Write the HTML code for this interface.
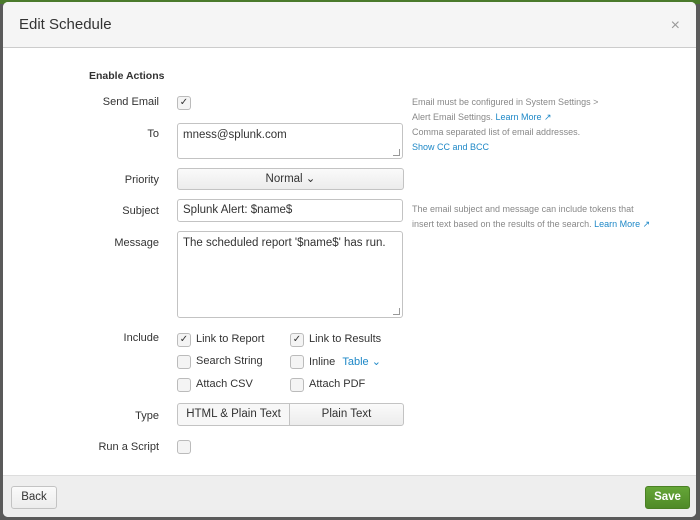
<!DOCTYPE html>
<html><head><style>
body{margin:0;width:700px;height:520px;background:#5a5a5a;position:relative;overflow:hidden;font-family:"Liberation Sans",sans-serif;font-size:11px;color:#333}
.top{position:absolute;left:0;top:0;width:700px;height:4px;background:#4a7a2c}
.m{position:absolute;left:3px;top:2px;width:693px;height:515px;background:#fff;border-radius:5px;overflow:hidden}
.hd{position:absolute;left:0;top:0;right:0;height:45px;background:#f5f5f5;border-bottom:1px solid #ccc}
.hd h1{margin:0;position:absolute;left:16px;top:14px;font-size:15px;font-weight:normal;color:#333}
.x{position:absolute;right:16px;top:15px;font-size:16px;color:#999}
.ft{position:absolute;left:0;top:473px;right:0;bottom:0;background:#eee;border-top:1px solid #ddd}
.a{position:absolute}
.lb{position:absolute;right:537px;text-align:right;white-space:nowrap}
.cb{position:absolute;width:12px;height:12px;border:1px solid #bbb;border-radius:3px;background:#f4f4f4;font-size:10px;line-height:12px;text-align:center;color:#333}
.in{position:absolute;left:174px;width:226px;border:1px solid #c3c3c3;border-radius:3px;background:#fff;box-sizing:border-box;padding:5px 5px;font-size:11.5px}
.gr{position:absolute;right:2px;bottom:2px;width:6px;height:6px;border-right:1px solid #999;border-bottom:1px solid #999;transform:skew(0)}
.bt{position:absolute;border:1px solid #c3c3c3;border-radius:3px;background:linear-gradient(#fafafa,#ececec);box-sizing:border-box;text-align:center;font-size:11.5px}
.h{position:absolute;left:409px;color:#888;font-size:9px;line-height:15px}
.lk{color:#1e88c7}
</style></head><body>
<div class="top"></div>
<div class="m">
<div class="hd"><h1>Edit Schedule</h1><div class="x">×</div></div>
<div class="a" style="left:86px;top:68px;font-weight:bold;font-size:10.5px">Enable Actions</div>
<div class="lb" style="top:94px">Send Email</div>
<div class="cb" style="left:174px;top:94px">✓</div>
<div class="h" style="top:93px">Email must be configured in System Settings &gt;<br>Alert Email Settings. <span class="lk">Learn More ↗</span></div>
<div class="lb" style="top:126px">To</div>
<div class="in" style="top:121px;height:36px">mness@splunk.com<div class="gr"></div></div>
<div class="h" style="top:123px">Comma separated list of email addresses.<br><span class="lk">Show CC and BCC</span></div>
<div class="lb" style="top:172px">Priority</div>
<div class="bt" style="left:174px;top:166px;width:227px;height:22px;line-height:20px">Normal ⌄</div>
<div class="lb" style="top:203px">Subject</div>
<div class="in" style="top:197px;height:23px;padding-top:4px">Splunk Alert: $name$</div>
<div class="h" style="top:200px">The email subject and message can include tokens that<br>insert text based on the results of the search. <span class="lk">Learn More ↗</span></div>
<div class="lb" style="top:235px">Message</div>
<div class="in" style="top:229px;height:87px">The scheduled report '$name$' has run.<div class="gr"></div></div>
<div class="lb" style="top:330px">Include</div>
<div class="cb" style="left:174px;top:331px">✓</div><div class="a" style="left:193px;top:331px">Link to Report</div>
<div class="cb" style="left:287px;top:331px">✓</div><div class="a" style="left:306px;top:331px">Link to Results</div>
<div class="cb" style="left:174px;top:353px"></div><div class="a" style="left:193px;top:353px">Search String</div>
<div class="cb" style="left:287px;top:353px"></div><div class="a" style="left:306px;top:353px">Inline <span class="lk" style="margin-left:4px">Table ⌄</span></div>
<div class="cb" style="left:174px;top:376px"></div><div class="a" style="left:193px;top:376px">Attach CSV</div>
<div class="cb" style="left:287px;top:376px"></div><div class="a" style="left:306px;top:376px">Attach PDF</div>
<div class="lb" style="top:408px">Type</div>
<div class="bt" style="left:174px;top:401px;width:113px;height:23px;line-height:21px;border-radius:3px 0 0 3px;background:#f7f7f7">HTML &amp; Plain Text</div>
<div class="bt" style="left:286px;top:401px;width:115px;height:23px;line-height:21px;border-radius:0 3px 3px 0">Plain Text</div>
<div class="lb" style="top:439px">Run a Script</div>
<div class="cb" style="left:174px;top:438px"></div>
<div class="ft">
<div class="bt" style="left:8px;top:10px;width:46px;height:23px;line-height:21px">Back</div>
<div class="bt" style="left:642px;top:10px;width:45px;height:23px;line-height:21px;background:linear-gradient(#65a637,#4f8a28);border-color:#4a8024;color:#fff;font-weight:bold">Save</div>
</div>
</div>
</body></html>
